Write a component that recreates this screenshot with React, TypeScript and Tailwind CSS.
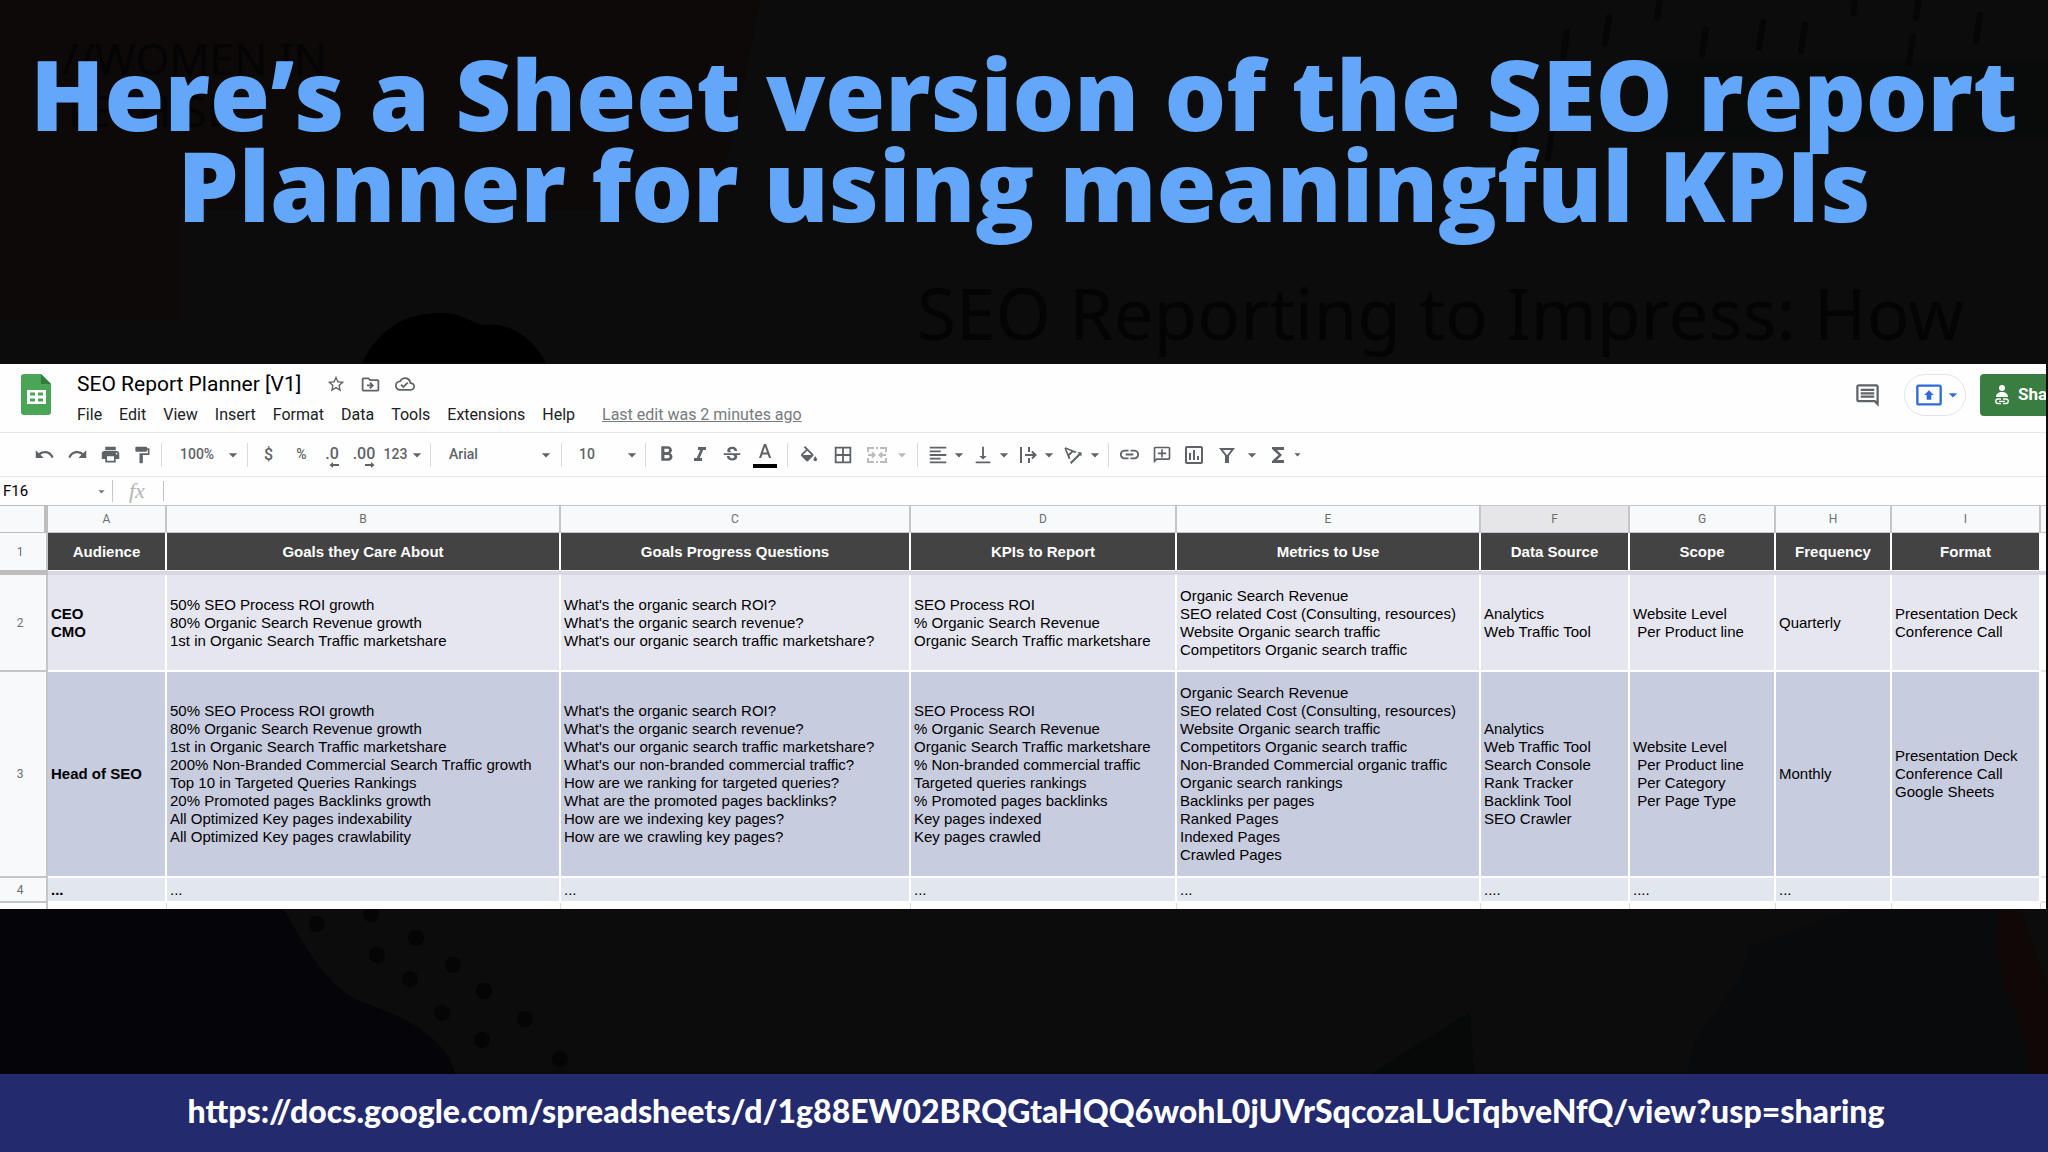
import type { ReactNode } from "react";
import {
  MdArrowDropDown,
  MdBorderAll,
  MdFormatAlignLeft,
  MdFormatBold,
  MdFormatItalic,
  MdFormatPaint,
  MdFunctions,
  MdInsertLink,
  MdOutlineAddComment,
  MdOutlineCloudDone,
  MdOutlineDriveFileMove,
  MdOutlineInsertChart,
  MdOutlineInsertComment,
  MdOutlinePresentToAll,
  MdPrint,
  MdRedo,
  MdStarOutline,
  MdStrikethroughS,
  MdTextRotationAngleup,
  MdUndo,
  MdVerticalAlignBottom,
} from "react-icons/md";

const MENUS = ["File", "Edit", "View", "Insert", "Format", "Data", "Tools", "Extensions", "Help"];

const COLUMNS = [
  { letter: "A", title: "Audience", width: "w-[119px]" },
  { letter: "B", title: "Goals they Care About", width: "w-[394px]" },
  { letter: "C", title: "Goals Progress Questions", width: "w-[350px]" },
  { letter: "D", title: "KPIs to Report", width: "w-[266px]" },
  { letter: "E", title: "Metrics to Use", width: "w-[304px]" },
  { letter: "F", title: "Data Source", width: "w-[149px]" },
  { letter: "G", title: "Scope", width: "w-[146px]" },
  { letter: "H", title: "Frequency", width: "w-[116px]" },
  { letter: "I", title: "Format", width: "w-[149px]" },
];

const ROWS = [
  {
    number: 2,
    height: "h-[97px]",
    color: "bg-[#e6e6f0]",
    cells: [
      ["CEO", "CMO"],
      ["50% SEO Process ROI growth", "80% Organic Search Revenue growth", "1st in Organic Search Traffic marketshare"],
      ["What's the organic search ROI?", "What's the organic search revenue?", "What's our organic search traffic marketshare?"],
      ["SEO Process ROI", "% Organic Search Revenue", "Organic Search Traffic marketshare"],
      [
        "Organic Search Revenue",
        "SEO related Cost (Consulting, resources)",
        "Website Organic search traffic",
        "Competitors Organic search traffic",
      ],
      ["Analytics", "Web Traffic Tool"],
      ["Website Level", " Per Product line"],
      ["Quarterly"],
      ["Presentation Deck", "Conference Call"],
    ],
  },
  {
    number: 3,
    height: "h-[206px]",
    color: "bg-[#c8ccdf]",
    cells: [
      ["Head of SEO"],
      [
        "50% SEO Process ROI growth",
        "80% Organic Search Revenue growth",
        "1st in Organic Search Traffic marketshare",
        "200% Non-Branded Commercial Search Traffic growth",
        "Top 10 in Targeted Queries Rankings",
        "20% Promoted pages Backlinks growth",
        "All Optimized Key pages indexability",
        "All Optimized Key pages crawlability",
      ],
      [
        "What's the organic search ROI?",
        "What's the organic search revenue?",
        "What's our organic search traffic marketshare?",
        "What's our non-branded commercial traffic?",
        "How are we ranking for targeted queries?",
        "What are the promoted pages backlinks?",
        "How are we indexing key pages?",
        "How are we crawling key pages?",
      ],
      [
        "SEO Process ROI",
        "% Organic Search Revenue",
        "Organic Search Traffic marketshare",
        "% Non-branded commercial traffic",
        "Targeted queries rankings",
        "% Promoted pages backlinks",
        "Key pages indexed",
        "Key pages crawled",
      ],
      [
        "Organic Search Revenue",
        "SEO related Cost (Consulting, resources)",
        "Website Organic search traffic",
        "Competitors Organic search traffic",
        "Non-Branded Commercial organic traffic",
        "Organic search rankings",
        "Backlinks per pages",
        "Ranked Pages",
        "Indexed Pages",
        "Crawled Pages",
      ],
      ["Analytics", "Web Traffic Tool", "Search Console", "Rank Tracker", "Backlink Tool", "SEO Crawler"],
      ["Website Level", " Per Product line", " Per Category", " Per Page Type"],
      ["Monthly"],
      ["Presentation Deck", "Conference Call", "Google Sheets"],
    ],
  },
  {
    number: 4,
    height: "h-[25px]",
    color: "bg-[#e2e6ee]",
    cells: [["..."], ["..."], ["..."], ["..."], ["..."], ["...."], ["...."], ["..."], [""]],
  },
];

function Tool({ label, className = "w-[33px]", children }: { label: string; className?: string; children: ReactNode }) {
  return (
    <button type="button" aria-label={label} className={`flex h-8 shrink-0 items-center justify-center ${className}`}>
      {children}
    </button>
  );
}

function Separator() {
  return <div className="h-6 w-px shrink-0 bg-[#dadce0]" />;
}

function Picker({ label, value, className }: { label: string; value: string; className: string }) {
  return (
    <div className={`grid shrink-0 items-center ${className}`}>
      <select aria-label={label} className="col-start-1 row-start-1 w-full appearance-none bg-transparent outline-none">
        <option>{value}</option>
      </select>
      <MdArrowDropDown size={20} className="pointer-events-none col-start-1 row-start-1 justify-self-end" />
    </div>
  );
}

function Caret() {
  return <MdArrowDropDown size={20} className="shrink-0" />;
}

function SheetsLogo() {
  return (
    <svg viewBox="0 0 30 41" className="h-[41px] w-[30px] shrink-0">
      <path d="M3 0h17l10 10v28a3 3 0 0 1-3 3H3a3 3 0 0 1-3-3V3a3 3 0 0 1 3-3z" fill="#4aa656" />
      <path d="M20 0l10 10H20z" fill="#2f7d3d" />
      <path d="M6 16h19v14H6zM9 18.500v3h5v-3zm8 0v3h5v-3zM9 24.500v3h5v-3zm8 0v3h5v-3z" fill="#fff" fillRule="evenodd" />
    </svg>
  );
}

function Decimals({ digits, more }: { digits: string; more?: boolean }) {
  return (
    <span className="flex flex-col items-end pt-1">
      <span className="leading-4">{digits}</span>
      <svg viewBox="0 0 10 6" className={`h-[6px] w-[10px] ${more ? "-scale-x-100" : ""}`}>
        <path d="M4 0v2h6v2H4v2L0.500 3z" fill="currentColor" />
      </svg>
    </span>
  );
}

function Backdrop() {
  const dots = [
    [317, 924], [371, 914], [416, 938], [377, 955], [453, 965], [410, 979],
    [484, 991], [442, 1013], [525, 1019], [482, 1040], [560, 1059],
  ];
  const strokes = [
    [1567, 45], [1609, 30], [1661, 5], [1706, 43], [1763, 35], [1805, 38],
    [1857, 0], [1920, 5], [1980, 28], [1913, 50], [1517, 135], [1552, 145],
  ];
  return (
    <div aria-hidden="true" className="absolute inset-0 -z-10 overflow-hidden bg-[#0c0c0d] font-['Noto_Sans',sans-serif] text-[#040405]">
      <svg viewBox="0 0 2048 1152" preserveAspectRatio="none" className="absolute inset-0 h-full w-full">
        <path d="M0 0h760l-30 150-20 60H180v110H0z" fill="#0d0909" />
        <path d="M1640 60h408v80h-408z" fill="#080b0a" />
        <path d="M362 363c18-35 42-50 80-50 20 0 30 10 40 12 28-4 52 14 64 38z" fill="#000" />
        <path d="M0 907h282c30 50 45 80 80 95 60 20 88 45 94 75H0z" fill="#050409" />
        <path d="M1860 907h140l48 90v80h-360c0-60 60-80 60-130z" fill="#080a0b" />
        <path d="M1370 1074l100-62 4 62z" fill="#070909" />
        <path d="M2000 907h20l28 80v90h-20c4-60-44-90-28-170z" fill="#0f0806" />
        {dots.map(([x, y]) => <ellipse key={x} cx={x} cy={y} rx={8} ry={8} fill="#050505" />)}
        {strokes.map(([x, y]) => (
          <path key={x} d={`M${x} ${y - 13}l-4 26`} stroke="#060606" strokeWidth={6} strokeLinecap="round" />
        ))}
      </svg>
      <p className="absolute left-[62px] top-[32px] text-[44px] leading-[52px]">//WOMEN IN<br />TECH SEO</p>
      <p className="absolute right-[84px] top-[268px] whitespace-nowrap text-[71px] leading-[90px]">
        SEO Reporting to Impress: How
      </p>
    </div>
  );
}

function SheetHeader() {
  return (
    <header className="flex h-[68px] items-start overflow-hidden pl-[21px] pt-[10px] font-[Roboto,sans-serif]">
      <SheetsLogo />
      <div className="min-w-0 flex-1 pl-[26px]">
        <div className="flex h-5 items-center text-[#5f6368]">
          <h2 className="mr-[25px] text-[21px] leading-5 text-black">SEO Report Planner [V1]</h2>
          <div className="flex gap-[14px]">
            <button type="button" aria-label="Star"><MdStarOutline size={20} /></button>
            <button type="button" aria-label="Move"><MdOutlineDriveFileMove size={21} /></button>
            <button type="button" aria-label="Saved to Drive"><MdOutlineCloudDone size={20} /></button>
          </div>
        </div>
        <nav className="flex items-center gap-[17px] pt-[11px] text-[16px] leading-5 text-[#202124]">
          {MENUS.map((m) => <button type="button" key={m}>{m}</button>)}
          <a href="#history" className="ml-[10px] text-[#777a7e] underline">Last edit was 2 minutes ago</a>
        </nav>
      </div>
      <div className="flex h-[42px] shrink-0 items-center">
        <button type="button" aria-label="Open comments" className="mr-[23px] text-[#5f6368]">
          <MdOutlineInsertComment size={27} />
        </button>
        <button
          type="button"
          aria-label="Present"
          className="mr-[14px] flex h-[42px] w-[62px] items-center justify-center rounded-full border border-[#e2e3ee] pl-2 text-[#2f6bd8]"
        >
          <MdOutlinePresentToAll size={28} className="shrink-0" />
          <Caret />
        </button>
        <button
          type="button"
          className="-mr-[34px] flex h-[42px] w-[100px] items-center gap-2 rounded bg-[#3a7d41] pl-[14px] text-[17px] font-bold text-white"
        >
          <svg viewBox="0 0 16 20" className="h-5 w-4 shrink-0" fill="currentColor">
            <circle cx="8" cy="3" r="3" />
            <path d="M2 12c0-3 2.500-5 6-5s6 2 6 5z" />
            <path d="M7 14H4a2 2 0 0 0 0 4.500h3M9 14h3a2 2 0 0 1 0 4.500H9M5 16.300h6" fill="none" stroke="currentColor" strokeWidth="1.300" />
          </svg>
          Share
        </button>
      </div>
    </header>
  );
}

function Toolbar() {
  return (
    <div className="flex h-[45px] items-center border-y border-[#e6e6ea] pl-7 font-[Roboto,sans-serif] text-[14px] font-medium text-[#5f6368]">
      <Tool label="Undo"><MdUndo size={21} /></Tool>
      <Tool label="Redo"><MdRedo size={21} /></Tool>
      <Tool label="Print"><MdPrint size={21} /></Tool>
      <Tool label="Paint format" className="w-[34px] pr-1"><MdFormatPaint size={20} /></Tool>
      <Separator />
      <Picker label="Zoom" value="100%" className="mr-1 w-[81px] pl-[18px]" />
      <Separator />
      <Tool label="Format as currency" className="ml-1 w-[33px] text-[16px]">$</Tool>
      <Tool label="Format as percent">%</Tool>
      <Tool label="Decrease decimal places" className="w-[28px] text-[16px]"><Decimals digits=".0" /></Tool>
      <Tool label="Increase decimal places" className="w-[36px] text-[16px]"><Decimals digits=".00" more /></Tool>
      <Tool label="More formats" className="mr-[4px] w-[44px] pl-[3px]">123<Caret /></Tool>
      <Separator />
      <Picker label="Font" value="Arial" className="mr-[5px] w-[125px] pl-[18px]" />
      <Separator />
      <Picker label="Font size" value="10" className="mr-[3px] w-[80px] pl-[17px]" />
      <Separator />
      <Tool label="Bold" className="ml-1 w-[33px]"><MdFormatBold size={25} /></Tool>
      <Tool label="Italic"><MdFormatItalic size={24} /></Tool>
      <Tool label="Strikethrough" className="w-8"><MdStrikethroughS size={22} /></Tool>
      <Tool label="Text color">
        <svg viewBox="0 0 24 28" className="h-7 w-6">
          <path d="M6 17h2.200l1.200-3.500h5.300L16 17h2.200L13.100 3h-2.200L6 17zm4-5.400l2-5.900 2 5.900z" fill="currentColor" />
          <rect y="23" width="24" height="4" fill="#000" />
        </svg>
      </Tool>
      <div className="w-[6px]" />
      <Separator />
      <Tool label="Fill color" className="ml-1 w-[33px]">
        <svg viewBox="2 0 20 20" className="h-[18px] w-[18px]" fill="currentColor">
          <path d="M16.560 8.940L7.620 0 6.210 1.410l2.380 2.380-5.150 5.150a1.500 1.500 0 0 0 0 2.120l5.500 5.500a1.500 1.500 0 0 0 2.120 0l5.500-5.500a1.500 1.500 0 0 0 0-2.120zM5.210 10L10 5.210 14.790 10zM19 11.500s-2 2.170-2 3.500a2 2 0 0 0 4 0c0-1.330-2-3.500-2-3.500z" />
        </svg>
      </Tool>
      <Tool label="Borders" className="w-[36px]"><MdBorderAll size={22} /></Tool>
      <Tool label="Merge cells" className="w-[56px] text-[#b9bbbf]">
        <svg viewBox="0 0 20 18" className="h-[18px] w-5 shrink-0" fill="none" stroke="currentColor" strokeWidth="2">
          <path d="M1 6V2h6M9 2h2M13 2h6v4M1 12v4h6M9 16h2M13 16h6v-4M1 9h6M5 6.500L7.500 9 5 11.500M19 9h-6M15 6.500L12.500 9l2.500 2.500" />
        </svg>
        <div className="w-[5px]" />
        <Caret />
      </Tool>
      <Separator />
      <Tool label="Horizontal align" className="ml-[7px] w-[45px]"><MdFormatAlignLeft size={22} /><Caret /></Tool>
      <Tool label="Vertical align" className="w-[45px]"><MdVerticalAlignBottom size={22} /><Caret /></Tool>
      <Tool label="Text wrapping" className="w-[45px]">
        <svg viewBox="0 0 22 22" className="h-[22px] w-[22px] shrink-0" fill="none" stroke="currentColor" strokeWidth="2">
          <path d="M4 3v16M12 3v5M12 14v5M8 11h10M15 7.500l3.500 3.500-3.500 3.500" />
        </svg>
        <Caret />
      </Tool>
      <Tool label="Text rotation" className="w-[45px]"><MdTextRotationAngleup size={24} className="shrink-0" /><Caret /></Tool>
      <div className="w-[3px]" />
      <Separator />
      <Tool label="Insert link" className="ml-1 w-[33px]"><MdInsertLink size={23} /></Tool>
      <Tool label="Insert comment" className="w-8"><MdOutlineAddComment size={20} className="-scale-x-100" /></Tool>
      <Tool label="Insert chart" className="w-8"><MdOutlineInsertChart size={24} /></Tool>
      <Tool label="Create a filter" className="w-[60px] gap-[7px]">
        <svg viewBox="0 0 16 16" className="h-4 w-4" fill="none" stroke="currentColor" strokeWidth="2">
          <path d="M2 2h12L9 8.500V15H7V8.500z" />
        </svg>
        <Caret />
      </Tool>
      <Tool label="Functions" className="w-[30px]"><MdFunctions size={24} className="shrink-0" /><MdArrowDropDown size={15} className="shrink-0" /></Tool>
    </div>
  );
}

function FormulaBar() {
  return (
    <div className="flex h-7 items-center font-[Roboto,sans-serif]">
      <input aria-label="Name box" defaultValue="F16" className="w-[90px] bg-transparent pl-[3px] text-[15px] text-black outline-none" />
      <MdArrowDropDown size={15} className="ml-1 text-[#777]" />
      <div className="ml-[3px] h-[22px] w-px bg-[#c8c8c8]" />
      <label htmlFor="formula" className="w-[50px] pl-[16px] font-['Liberation_Serif',serif] text-[22px] italic leading-7 text-[#b5b5b5]">
        fx
      </label>
      <div className="h-5 w-px bg-[#c0c0c0]" />
      <input id="formula" className="min-w-0 flex-1 bg-transparent px-2 outline-none" />
    </div>
  );
}

function Grid() {
  return (
    <table className="w-full table-fixed border-separate border-spacing-0 text-[15px] leading-[18px] text-black">
      <colgroup>
        <col className="w-[48px]" />
        {COLUMNS.map((c) => <col key={c.letter} className={c.width} />)}
        <col />
      </colgroup>
      <thead className="font-[Roboto,sans-serif] text-[12px] text-[#6b6e72]">
        <tr className="h-7 bg-[#f8f9fa]">
          <th className="border-b border-r-4 border-t border-[#bdbdbd] p-0" />
          {COLUMNS.map((c) => (
            <th
              key={c.letter}
              scope="col"
              className={`border-b border-r-2 border-t border-[#c6c6c8] p-0 font-normal ${c.letter === "F" ? "bg-[#e6e6e8]" : ""}`}
            >
              {c.letter}
            </th>
          ))}
          <th className="border-b border-t border-[#c6c6c8] p-0" />
        </tr>
      </thead>
      <tbody>
        <tr className="h-[37px]">
          <th scope="row" className="border-r-2 border-[#c6c6c8] bg-[#f8f9fa] p-0 pr-[22px] pl-4 font-[Roboto,sans-serif] text-[12px] font-normal text-[#6b6e72]">1</th>
          {COLUMNS.map((c) => (
            <th key={c.letter} className="border-r-2 border-white bg-[#434344] p-0 font-bold text-white">{c.title}</th>
          ))}
          <td />
        </tr>
        <tr className="h-[5px]">
          <td className="bg-[#bdbdbd] p-0" />
          <td colSpan={10} className="border-t border-white bg-[#d8d7e3] p-0" />
        </tr>
        {ROWS.map((row) => (
          <tr key={row.number} className={row.height}>
            <th scope="row" className="border-b-2 border-r-2 border-[#c6c6c8] bg-[#f8f9fa] p-0 pr-[22px] pl-4 font-[Roboto,sans-serif] text-[12px] font-normal text-[#6b6e72]">
              {row.number}
            </th>
            {row.cells.map((lines, i) => (
              <td
                key={COLUMNS[i].letter}
                className={`whitespace-pre border-b-2 border-r-2 border-white p-0 pl-[3px] ${row.color} ${i === 0 ? "font-bold" : ""}`}
              >
                {lines.map((line, n) => <div key={n}>{line}</div>)}
              </td>
            ))}
            <td className="border-b-2 border-[#e4e6ea] p-0" />
          </tr>
        ))}
        <tr className="h-[6px]">
          <td className="border-r-2 border-[#c6c6c8] p-0" />
          {COLUMNS.map((c) => <td key={c.letter} className="border-r border-[#d8dade] p-0" />)}
          <td />
        </tr>
      </tbody>
    </table>
  );
}

export default function App() {
  return (
    <main className="relative isolate flex min-h-screen flex-col font-['Liberation_Sans',Arial,sans-serif]">
      <Backdrop />
      <h1 className="h-[364px] shrink-0 pt-12 text-center font-['Open_Sans',sans-serif] text-[97px] font-extrabold leading-[91px] text-[#63a7fb]">
        Here’s a Sheet version of the SEO report
        <br />
        Planner for using meaningful KPIs
      </h1>
      <section aria-label="Spreadsheet" className="mr-[2px] overflow-hidden bg-[#fefefe]">
        <SheetHeader />
        <Toolbar />
        <FormulaBar />
        <Grid />
      </section>
      <div className="min-h-10 flex-1" />
      <footer className="flex h-[78px] shrink-0 items-center justify-center bg-[#232a6e] pl-6 pb-1 font-[Lato,sans-serif] text-[32px] font-black text-white">
        <a href="https://docs.google.com/spreadsheets/d/1g88EW02BRQGtaHQQ6wohL0jUVrSqcozaLUcTqbveNfQ/view?usp=sharing">
          https://docs.google.com/spreadsheets/d/1g88EW02BRQGtaHQQ6wohL0jUVrSqcozaLUcTqbveNfQ/view?usp=sharing
        </a>
      </footer>
    </main>
  );
}
